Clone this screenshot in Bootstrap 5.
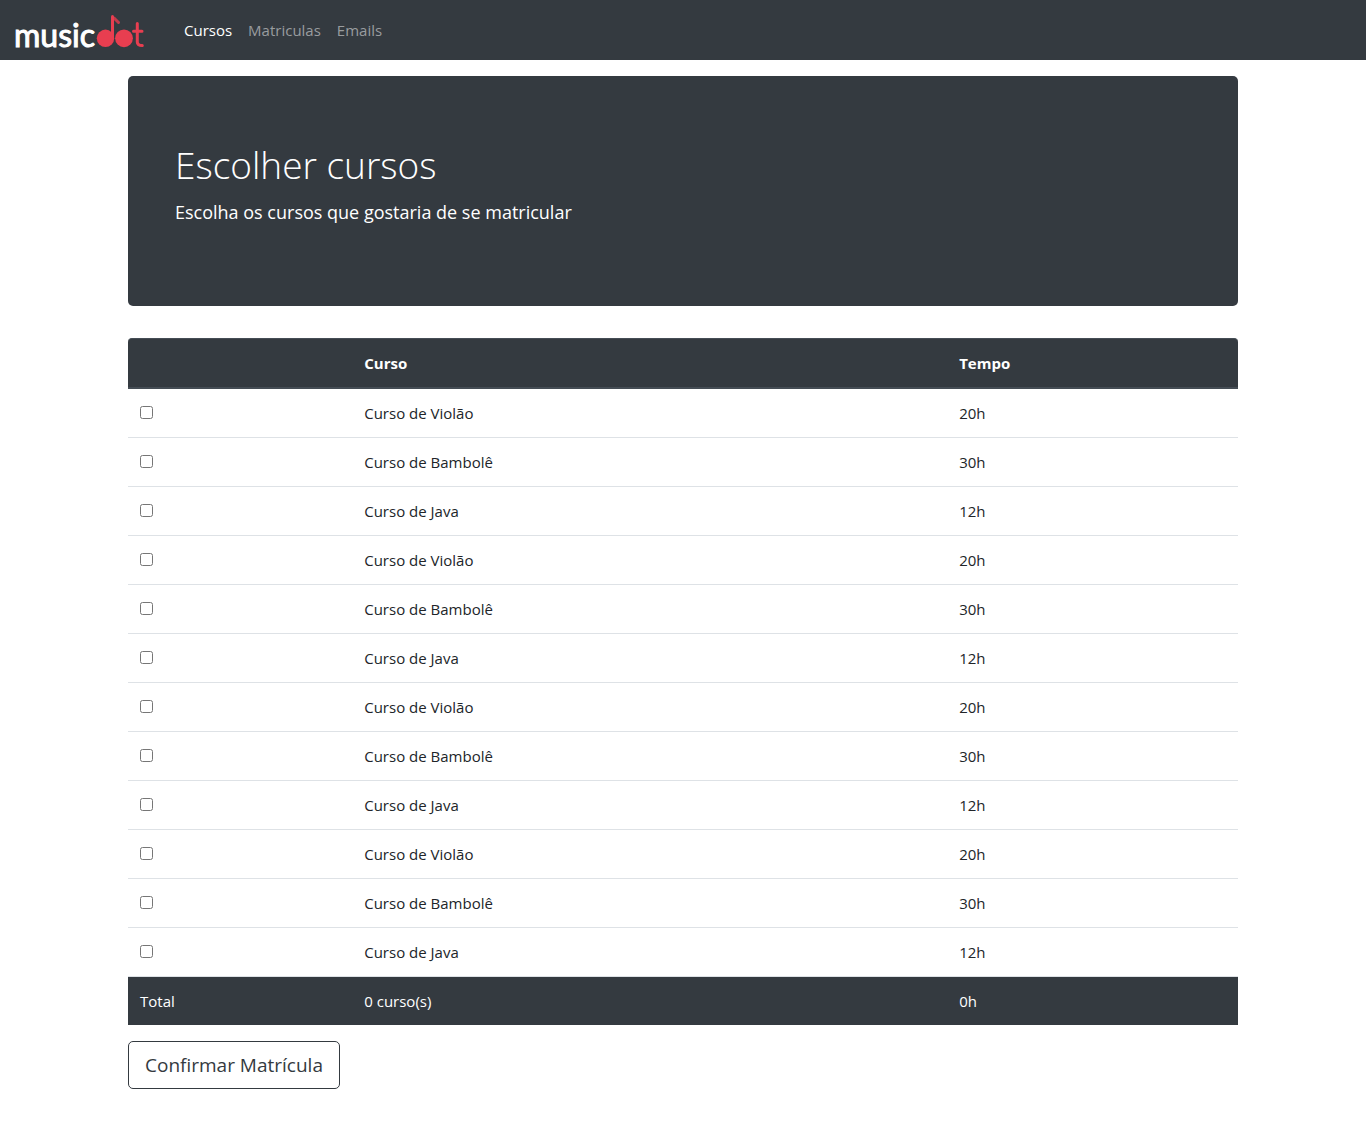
<!DOCTYPE html>
<html lang="pt-BR">
<head>
<meta charset="utf-8">
<meta name="viewport" content="width=device-width, initial-scale=1">
<title>Musicdot - Escolher cursos</title>
<link href="https://cdn.jsdelivr.net/npm/bootstrap@5.3.0/dist/css/bootstrap.min.css" rel="stylesheet">
<style>
  body { font-family: "Open Sans", "Noto Sans", sans-serif; font-size: 15px; line-height: 24px; color: #212529; }
  .site-bar, .hero-panel, .course-table thead th, .course-table tfoot td { background-color: #343a40; color: #fff; }
  .site-bar { --bs-navbar-padding-y: 8px; min-height: 60px; }
  .site-bar .navbar-brand { margin-right: 24px; }
  .brand-word { font-family: Lato, sans-serif; font-size: 32px; stroke: #fff; stroke-width: 1px; }
  .site-bar .nav-link { color: #999c9f; }
  .site-bar .nav-link.active { color: #fff; }
  .page-wrap { --bs-gutter-x: 30px; }
  .hero-panel { padding: 65px 47px 63px; border-radius: 5px; }
  .hero-panel h1 { font-size: 37px; line-height: 48px; font-weight: 300; }
  .hero-panel p { font-size: 18px; line-height: 30px; font-weight: 400; }
  .course-table { border-collapse: separate; border-spacing: 0; --bs-table-bg: transparent; }
  .course-table > :not(caption) > * > * { padding: 12px; }
  .course-table thead th { border-top: 1px solid #454d55; border-bottom: 2px solid #454d55; }
  .course-table thead th:first-child { width: 20.2%; border-top-left-radius: 4px; }
  .course-table thead th:nth-child(2) { width: 53.6%; }
  .course-table thead th:last-child { border-top-right-radius: 4px; }
  .course-table tbody td { border-bottom: 1px solid #dee2e6; }
  .course-table tfoot td { border-bottom: 0; }
  .course-table input { width: 13px; height: 13px; }
  .btn-confirm { --bs-btn-color: #343a40; --bs-btn-border-color: #343a40; --bs-btn-hover-bg: #343a40; --bs-btn-hover-color: #fff; --bs-btn-font-size: 19px; --bs-btn-border-radius: 5px; line-height: 30px; }
</style>
</head>
<body>
<nav class="navbar navbar-expand site-bar">
  <div class="container-fluid px-3">
    <a class="navbar-brand p-0" href="#" aria-label="musicdot">
      <svg class="d-block overflow-visible" width="136" height="40" viewBox="0 0 136 40" aria-hidden="true">
        <text class="brand-word" x="-2" y="37" fill="#fff">music</text>
        <path d="M98 8l4.500 4.500" fill="none" stroke="#c23a4b" stroke-width="3" stroke-linecap="round"/>
        <g fill="#e83e50">
          <circle cx="89.500" cy="28.300" r="8.700"/>
          <circle cx="108" cy="28.300" r="8.900"/>
        </g>
        <path d="M96.500 28V6.500" fill="none" stroke="#e83e50" stroke-width="3" stroke-linecap="round"/>
        <path d="M121.300 13.500V32q0 3.500 5 3.500M117.500 21.300h8.500" fill="none" stroke="#e83e50" stroke-width="3" stroke-linecap="round"/>
      </svg>
    </a>
    <ul class="navbar-nav me-auto">
      <li class="nav-item"><a class="nav-link active" aria-current="page" href="#">Cursos</a></li>
      <li class="nav-item"><a class="nav-link" href="#">Matriculas</a></li>
      <li class="nav-item"><a class="nav-link" href="#">Emails</a></li>
    </ul>
  </div>
</nav>
<main class="container page-wrap mt-3 mb-5">
  <header class="hero-panel mb-4">
    <h1 class="mb-2">Escolher cursos</h1>
    <p class="mb-3">Escolha os cursos que gostaria de se matricular</p>
  </header>
  <form class="pt-2">
    <table class="table course-table mb-3">
      <thead>
        <tr><th scope="col" aria-label="Selecionar"></th><th scope="col">Curso</th><th scope="col">Tempo</th></tr>
      </thead>
      <tbody>
        <tr><td><input type="checkbox" class="m-0" id="curso1"></td><td><label for="curso1">Curso de Violão</label></td><td>20h</td></tr>
        <tr><td><input type="checkbox" class="m-0" id="curso2"></td><td><label for="curso2">Curso de Bambolê</label></td><td>30h</td></tr>
        <tr><td><input type="checkbox" class="m-0" id="curso3"></td><td><label for="curso3">Curso de Java</label></td><td>12h</td></tr>
        <tr><td><input type="checkbox" class="m-0" id="curso4"></td><td><label for="curso4">Curso de Violão</label></td><td>20h</td></tr>
        <tr><td><input type="checkbox" class="m-0" id="curso5"></td><td><label for="curso5">Curso de Bambolê</label></td><td>30h</td></tr>
        <tr><td><input type="checkbox" class="m-0" id="curso6"></td><td><label for="curso6">Curso de Java</label></td><td>12h</td></tr>
        <tr><td><input type="checkbox" class="m-0" id="curso7"></td><td><label for="curso7">Curso de Violão</label></td><td>20h</td></tr>
        <tr><td><input type="checkbox" class="m-0" id="curso8"></td><td><label for="curso8">Curso de Bambolê</label></td><td>30h</td></tr>
        <tr><td><input type="checkbox" class="m-0" id="curso9"></td><td><label for="curso9">Curso de Java</label></td><td>12h</td></tr>
        <tr><td><input type="checkbox" class="m-0" id="curso10"></td><td><label for="curso10">Curso de Violão</label></td><td>20h</td></tr>
        <tr><td><input type="checkbox" class="m-0" id="curso11"></td><td><label for="curso11">Curso de Bambolê</label></td><td>30h</td></tr>
        <tr><td><input type="checkbox" class="m-0" id="curso12"></td><td><label for="curso12">Curso de Java</label></td><td>12h</td></tr>
      </tbody>
      <tfoot>
        <tr><td>Total</td><td>0 curso(s)</td><td>0h</td></tr>
      </tfoot>
    </table>
    <button type="submit" class="btn btn-lg btn-confirm">Confirmar Matrícula</button>
  </form>
</main>
<script src="https://cdn.jsdelivr.net/npm/bootstrap@5.3.0/dist/js/bootstrap.bundle.min.js"></script>
</body>
</html>
